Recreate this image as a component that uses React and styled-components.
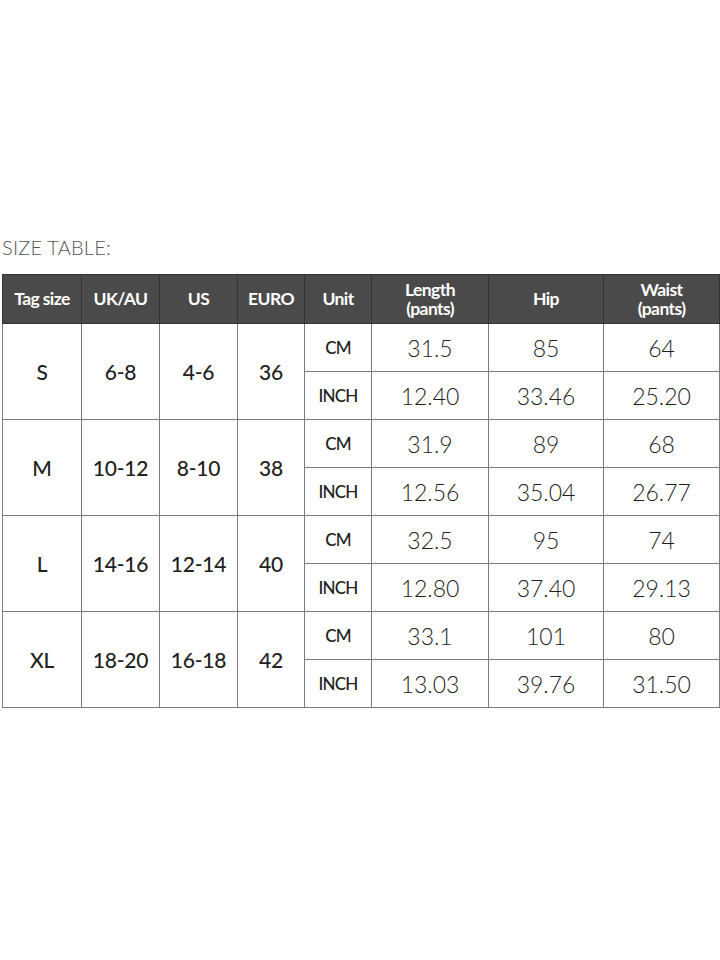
import styled, { createGlobalStyle } from "styled-components";

const GlobalStyle = createGlobalStyle`
  body {
    margin: 0;
    background: #fff;
    font-family: Lato, "Open Sans", sans-serif;
  }
`;

const Page = styled.div`
  width: 720px;
  height: 960px;
  padding: 236px 0 0 2px;
  box-sizing: border-box;
`;

const Title = styled.div`
  font-size: 20px;
  font-weight: 300;
  color: #555;
  line-height: 22px;
  margin-bottom: 16px;
  letter-spacing: 0.2px;
`;

const Table = styled.table`
  border-collapse: collapse;
  table-layout: fixed;
  width: 718px;
  color: #222;
  td,
  th {
    border: 1px solid #7a7a7a;
    padding: 0;
    text-align: center;
  }
`;

const HeadCell = styled.th`
  background: #4a4a4a;
  color: #fff;
  height: 48px;
  font-size: 17.5px;
  font-weight: 700;
  letter-spacing: -0.6px;
  line-height: 20px;
  && {
    border-color: #333;
  }
`;

const HeadLine = styled.span`
  display: block;
  line-height: 19px;
`;

const SizeCell = styled.td`
  font-size: 21px;
  font-weight: 500;
  letter-spacing: -0.2px;
`;

const UnitCell = styled.td`
  height: 47px;
  font-size: 17px;
  font-weight: 500;
  letter-spacing: -0.8px;
  color: #222;
`;

const ValueCell = styled.td`
  font-size: 23px;
  font-weight: 300;
  color: #1e1e1e;
`;

const columns = [
  { label: "Tag size", width: 79 },
  { label: "UK/AU", width: 78 },
  { label: "US", width: 78 },
  { label: "EURO", width: 67 },
  { label: "Unit", width: 67 },
  { label: ["Length", "(pants)"], width: 117 },
  { label: "Hip", width: 115 },
  { label: ["Waist", "(pants)"], width: 116 },
];

const sizes = [
  { tag: "S", uk: "6-8", us: "4-6", euro: "36", cm: ["31.5", "85", "64"], inch: ["12.40", "33.46", "25.20"] },
  { tag: "M", uk: "10-12", us: "8-10", euro: "38", cm: ["31.9", "89", "68"], inch: ["12.56", "35.04", "26.77"] },
  { tag: "L", uk: "14-16", us: "12-14", euro: "40", cm: ["32.5", "95", "74"], inch: ["12.80", "37.40", "29.13"] },
  { tag: "XL", uk: "18-20", us: "16-18", euro: "42", cm: ["33.1", "101", "80"], inch: ["13.03", "39.76", "31.50"] },
];

export default function App() {
  return (
    <>
      <GlobalStyle />
      <Page>
        <Title>SIZE TABLE:</Title>
        <Table>
          <colgroup>
            {columns.map((c, i) => (
              <col key={i} style={{ width: c.width }} />
            ))}
          </colgroup>
          <thead>
            <tr>
              {columns.map((c, i) => (
                <HeadCell key={i}>
                  {Array.isArray(c.label)
                    ? c.label.map((l) => <HeadLine key={l}>{l}</HeadLine>)
                    : c.label}
                </HeadCell>
              ))}
            </tr>
          </thead>
          <tbody>
            {sizes.map((s) => (
              <>
                <tr key={s.tag + "cm"}>
                  <SizeCell rowSpan={2}>{s.tag}</SizeCell>
                  <SizeCell rowSpan={2}>{s.uk}</SizeCell>
                  <SizeCell rowSpan={2}>{s.us}</SizeCell>
                  <SizeCell rowSpan={2}>{s.euro}</SizeCell>
                  <UnitCell>CM</UnitCell>
                  {s.cm.map((v, i) => (
                    <ValueCell key={i}>{v}</ValueCell>
                  ))}
                </tr>
                <tr key={s.tag + "inch"}>
                  <UnitCell>INCH</UnitCell>
                  {s.inch.map((v, i) => (
                    <ValueCell key={i}>{v}</ValueCell>
                  ))}
                </tr>
              </>
            ))}
          </tbody>
        </Table>
      </Page>
    </>
  );
}
